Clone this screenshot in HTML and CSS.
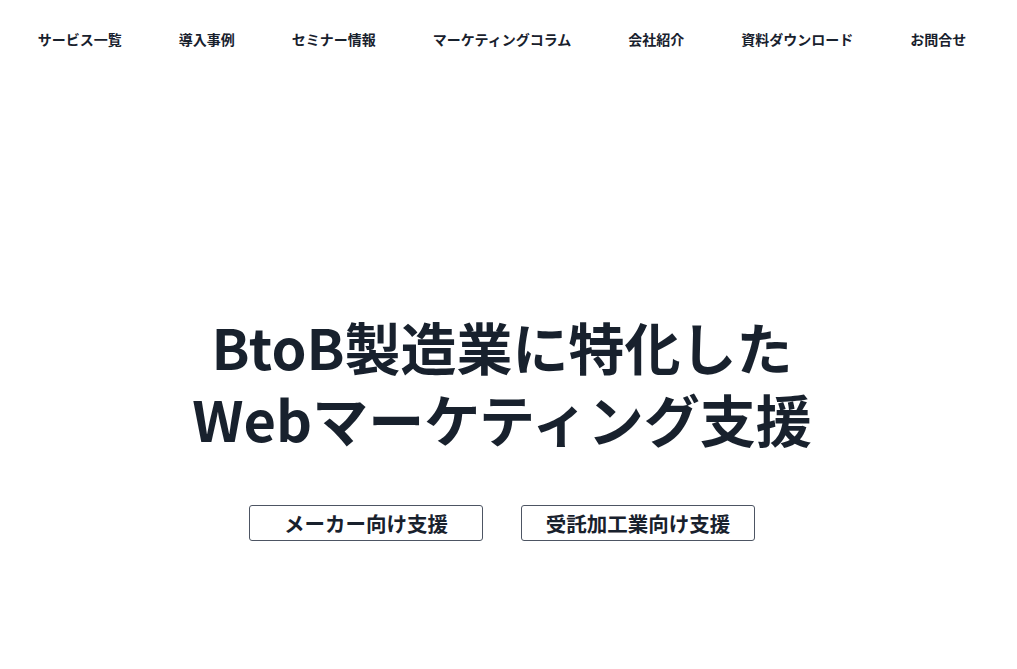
FILE: index.html
```html
<!DOCTYPE html>
<html lang="ja">
<head>
<meta charset="utf-8">
<link rel="stylesheet" href="styles.css">
</head>
<body>
<div class="page">
  <nav class="nav">
    <a class="nav-item">サービス一覧</a>
    <a class="nav-item">導入事例</a>
    <a class="nav-item">セミナー情報</a>
    <a class="nav-item">マーケティングコラム</a>
    <a class="nav-item">会社紹介</a>
    <a class="nav-item">資料ダウンロード</a>
    <a class="nav-item">お問合せ</a>
  </nav>
  <main class="hero">
    <h1 class="title">BtoB製造業に特化した<br>Webマーケティング支援</h1>
    <div class="buttons">
      <a class="btn">メーカー向け支援</a>
      <a class="btn">受託加工業向け支援</a>
    </div>
  </main>
</div>
</body>
</html>
```
FILE: styles.css
```css
html, body {
  margin: 0;
  padding: 0;
  background: #ffffff;
}
body {
  font-family: "Noto Sans CJK JP", "Noto Sans", sans-serif;
  color: #18212d;
}
.page {
  width: 1004px;
}
.nav {
  display: flex;
  justify-content: center;
  gap: 57px;
  padding-top: 29px;
}
.nav-item {
  font-size: 14px;
  font-weight: 700;
  line-height: 20px;
  color: #18212d;
  text-decoration: none;
}
.hero {
  display: flex;
  flex-direction: column;
  align-items: center;
  padding-top: 261px;
}
.title {
  margin: 0;
  font-size: 56px;
  font-weight: 700;
  line-height: 72px;
  text-align: center;
}
.buttons {
  display: flex;
  gap: 38px;
  margin-top: 51px;
}
.btn {
  box-sizing: border-box;
  width: 234px;
  height: 36px;
  border: 1px solid #4d5563;
  border-radius: 3px;
  display: flex;
  align-items: center;
  justify-content: center;
  font-size: 20.5px;
  font-weight: 700;
  color: #18212d;
}
```
